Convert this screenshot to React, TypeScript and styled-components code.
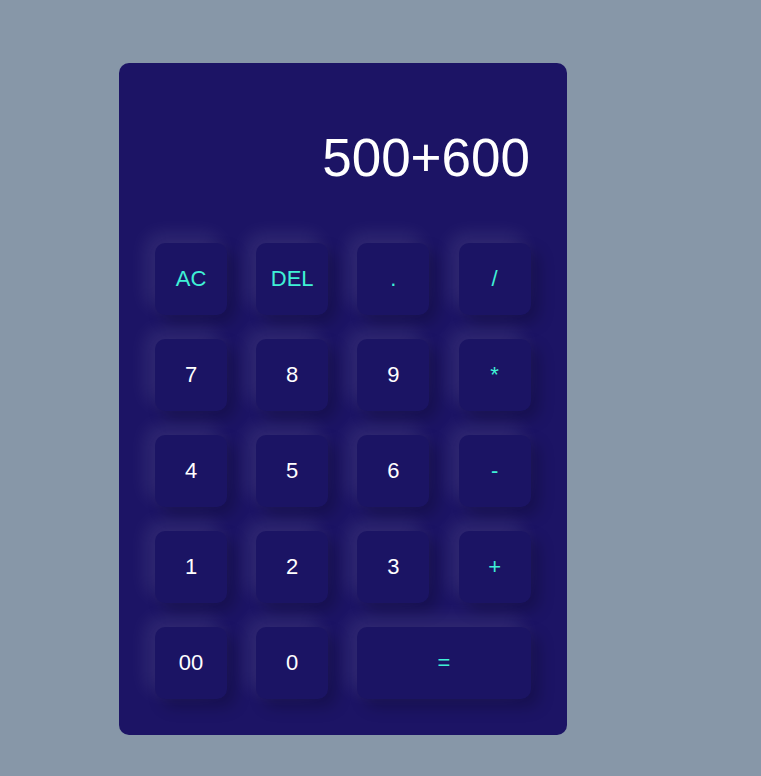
import React from "react";
import styled, { createGlobalStyle } from "styled-components";

const Global = createGlobalStyle`
  html, body { margin: 0; padding: 0; }
  body {
    background: #8797a8;
    font-family: "Liberation Sans", Arial, sans-serif;
    min-height: 776px;
  }
`;

const Page = styled.div`
  padding: 63px 0 0 119px;
`;

const Calculator = styled.div`
  width: 448px;
  box-sizing: border-box;
  padding: 36px 37px 36px 36px;
  background: #1c1465;
  border-radius: 10px;
  display: flex;
  flex-direction: column;
`;

const Display = styled.div`
  height: 144px;
  display: flex;
  align-items: flex-start;
  justify-content: flex-end;
  color: #ffffff;
  font-size: 53px;
  line-height: 1;
  padding-top: 32px;
  box-sizing: border-box;
`;

const Keys = styled.div`
  display: grid;
  grid-template-columns: repeat(4, 72px);
  grid-auto-rows: 72px;
  column-gap: 29.2px;
  row-gap: 24px;
`;

const Key = styled.button<{ $op?: boolean; $wide?: boolean }>`
  grid-column: ${(p) => (p.$wide ? "span 2" : "auto")};
  border: none;
  border-radius: 10px;
  background: #1b1464;
  color: ${(p) => (p.$op ? "#3ff1d6" : "#ffffff")};
  font-family: "Liberation Sans", Arial, sans-serif;
  font-size: 22px;
  cursor: pointer;
  box-shadow: -8px -8px 20px rgba(255, 255, 255, 0.1),
    8px 8px 16px rgba(0, 0, 0, 0.22);
`;

const keys: { label: string; op?: boolean; wide?: boolean }[] = [
  { label: "AC", op: true },
  { label: "DEL", op: true },
  { label: ".", op: true },
  { label: "/", op: true },
  { label: "7" },
  { label: "8" },
  { label: "9" },
  { label: "*", op: true },
  { label: "4" },
  { label: "5" },
  { label: "6" },
  { label: "-", op: true },
  { label: "1" },
  { label: "2" },
  { label: "3" },
  { label: "+", op: true },
  { label: "00" },
  { label: "0" },
  { label: "=", op: true, wide: true },
];

export default function App() {
  return (
    <>
      <Global />
      <Page>
        <Calculator>
          <Display>500+600</Display>
          <Keys>
            {keys.map((k) => (
              <Key key={k.label} $op={k.op} $wide={k.wide}>
                {k.label}
              </Key>
            ))}
          </Keys>
        </Calculator>
      </Page>
    </>
  );
}
